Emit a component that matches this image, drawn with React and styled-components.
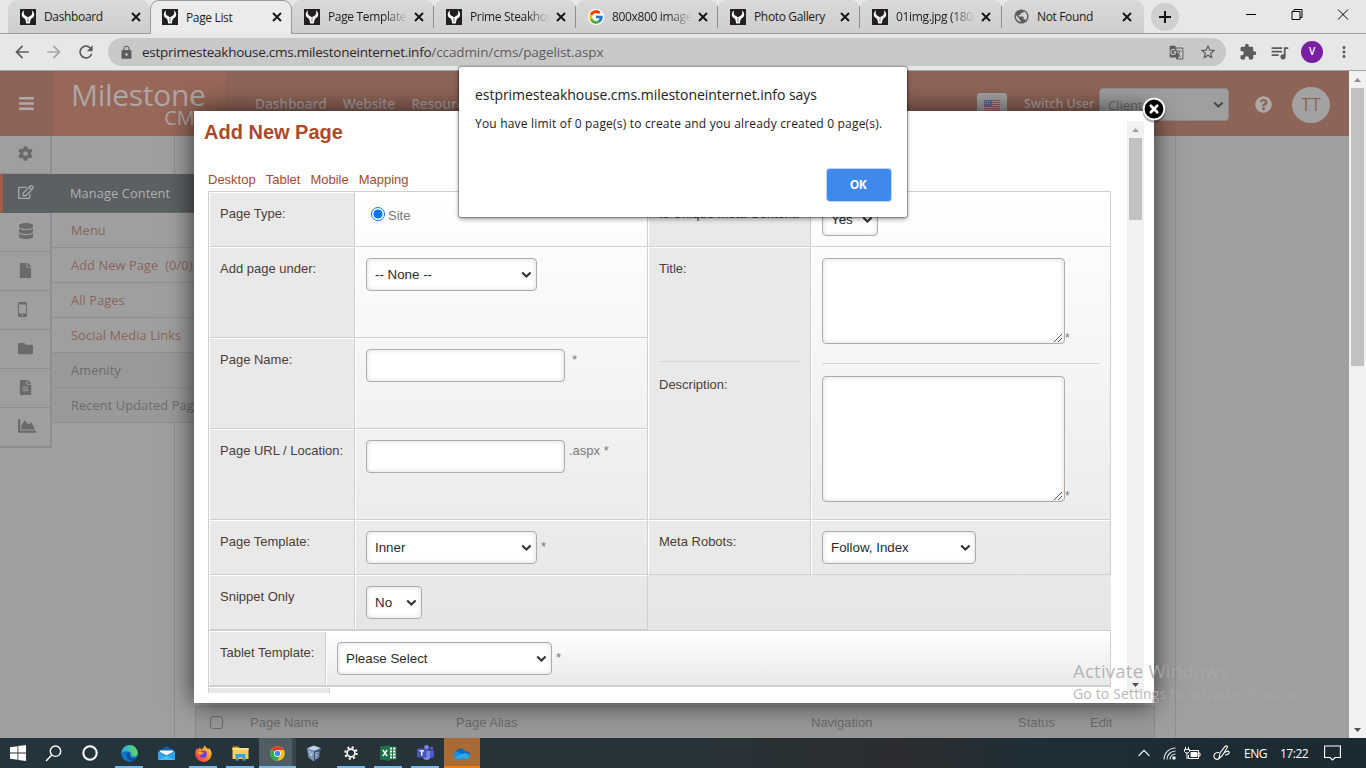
import React from "react";
import styled, { createGlobalStyle, css } from "styled-components";
import {
  MdArrowBack, MdArrowForward, MdRefresh, MdLock, MdGTranslate, MdStarBorder,
  MdExtension, MdQueueMusic, MdMoreVert, MdPublic,
} from "react-icons/md";
import {
  FaBars, FaCog, FaRegEdit, FaDatabase, FaFile, FaFolder, FaFileAlt, FaChartArea, FaQuestionCircle,
} from "react-icons/fa";
import { FcGoogle } from "react-icons/fc";

const GlobalStyle = createGlobalStyle`
  * { box-sizing: border-box; }
  body { margin: 0; overflow: hidden; }
`;

const ui = `"Open Sans", "Noto Sans", sans-serif`;
const arial = `"Liberation Sans", Arial, sans-serif`;

const Screen = styled.div`
  position: relative;
  width: 1366px;
  height: 768px;
  display: flex;
  flex-direction: column;
  overflow: hidden;
  font-family: ${ui};
`;

/* ---------- browser chrome ---------- */
const TabStrip = styled.div`
  height: 34px;
  flex: none;
  display: flex;
  padding-left: 8px;
  background: #e7e7e7;
  border-bottom: 1px solid #9b9b9b;
`;

const Tab = styled.div`
  width: 142px;
  height: 33px;
  padding: 0 ${(p) => p.$end ?? 9}px 0 12px;
  display: flex;
  align-items: center;
  border-radius: 9px 9px 0 0;
  background: linear-gradient(#d9d9d9, #cecece);
  border-right: ${(p) => (p.$sep ? "1px solid #8e8e8e" : "0")};
  border-image: ${(p) => (p.$sep ? "linear-gradient(transparent 7px, #8e8e8e 7px, #8e8e8e 27px, transparent 27px) 1" : "none")};
  ${(p) =>
    p.$active &&
    css`
      height: 34px;
      padding: 0 9px 1px 11px;
      background: #ebebeb;
      border: 1px solid #9b9b9b;
      border-bottom: 0;
    `}
`;

const TabTitle = styled.div`
  flex: 1;
  margin-left: 8px;
  padding-right: 2px;
  overflow: hidden;
  font-size: 12px;
  letter-spacing: -0.35px;
  color: #1c1c1c;
  white-space: nowrap;
  ${(p) => p.$fade && css`mask-image: linear-gradient(90deg, #000 70%, transparent);`}
`;

const CloseSvg = styled.svg`
  flex: none;
  margin-left: 6px;
`;

const NewTab = styled.div`
  width: 28px;
  height: 28px;
  margin: 3px 0 0 7px;
  border-radius: 50%;
  background: #cfcfcf;
  display: flex;
  align-items: center;
  justify-content: center;
`;

const WindowButtons = styled.div`
  margin-left: auto;
  width: 138px;
  height: 29px;
  display: flex;
  align-items: center;
  svg { flex: 1; }
`;

const Toolbar = styled.div`
  height: 37px;
  flex: none;
  display: flex;
  align-items: center;
  background: #e7e7e7;
  border-bottom: 1px solid #a3a3a3;
  color: #5a5c5e;
`;

const NavButtons = styled.div`
  width: 108px;
  padding-left: 12px;
  display: flex;
  gap: 12px;
`;

const AddressBar = styled.div`
  width: 1118px;
  height: 28px;
  padding: 0 9px 0 11px;
  border-radius: 14px;
  background: #c8c8c8;
  display: flex;
  align-items: center;
`;

const Url = styled.div`
  flex: 1;
  margin-left: 8px;
  font-size: 13.5px;
  letter-spacing: -0.26px;
  color: #28292b;
  span { color: #5c5e60; letter-spacing: -0.1px; }
`;

const ToolbarActions = styled.div`
  flex: 1;
  padding-left: 13px;
  display: flex;
  align-items: center;
`;

const Profile = styled.div`
  width: 22px;
  height: 22px;
  margin: 0 12px 0 11px;
  border-radius: 50%;
  background: #7b1fa2;
  color: #fff;
  font-size: 10px;
  font-weight: 600;
  line-height: 21px;
  text-align: center;
`;

/* ---------- page behind the dialog ---------- */
const Viewport = styled.div`
  height: 667px;
  flex: none;
  position: relative;
  display: flex;
`;

const Page = styled.div`
  width: 1349px;
  display: flex;
  flex-direction: column;
  background: #9f9f9f;
`;

const PageHeader = styled.div`
  height: 65px;
  flex: none;
  display: flex;
  background: #8f6458;
  color: #afabaa;
`;

const MenuToggle = styled.div`
  width: 53px;
  display: flex;
  align-items: center;
  justify-content: center;
`;

const Brand = styled.div`
  width: 172px;
  padding: 8px 19px 0 18px;
  background: #976759;
  color: #ada6a4;
  display: flex;
  flex-direction: column;
`;

const BrandName = styled.div`
  font-size: 30px;
  line-height: 32px;
  letter-spacing: -0.3px;
`;

const BrandSub = styled.div`
  text-align: right;
  font-size: 20px;
  line-height: 14px;
  letter-spacing: 0.1px;
`;

const MainNav = styled.div`
  width: 752px;
  padding: 0 0 1px 30px;
  display: flex;
  align-items: center;
  gap: 16px;
  font-size: 13.7px;
  letter-spacing: -0.1px;
  font-weight: 600;
  color: #ab9d98;
`;

const FlagBox = styled.div`
  width: 30px;
  height: 33px;
  margin: 22px 17px 0 0;
  border-radius: 3px;
  background: #a2a2a2;
  padding: 7px;
`;

const SwitchUser = styled.div`
  width: 75px;
  line-height: 66px;
  font-size: 12.6px;
  font-weight: 600;
  letter-spacing: -0.1px;
  color: #b0a29d;
`;

const UserSelect = styled.div`
  width: 130px;
  height: 33px;
  margin-top: 17px;
  padding: 0 4px 0 8px;
  border: 1px solid #8b8b8b;
  border-radius: 4px;
  background: #9f9f9f;
  display: flex;
  align-items: center;
  justify-content: space-between;
  font-size: 13px;
  line-height: 28px;
  color: #6d6d6d;
`;

const Help = styled.div`
  width: 63px;
  display: flex;
  align-items: center;
  padding: 2px 0 0 26px;
  color: #aeaaa9;
`;

const Avatar = styled.div`
  width: 38px;
  height: 36px;
  margin-top: 16px;
  border-radius: 50%;
  background: #a2a2a2;
  color: #8f6458;
  font-size: 17.5px;
  line-height: 35px;
  text-align: center;
`;

const PageBody = styled.div`
  flex: 1;
  display: flex;
`;

const IconRail = styled.div`
  width: 52px;
  height: 312px;
  border-right: 2px solid #909090;
  border-bottom: 2px solid #8c8c8c;
`;

const RailItem = styled.div`
  height: ${(p) => p.$h || 39}px;
  padding: 0 0 2px 18px;
  display: flex;
  align-items: center;
  color: #6a6a6a;
  border-bottom: 1px solid #8f8f8f;
  ${(p) =>
    p.$active &&
    css`
      width: 52px;
      padding-left: 15px;
      border-left: 3px solid #a15c47;
      border-bottom-color: #5b6063;
      background: #5b6063;
      color: #a8a8a8;
    `}
`;

/* Stacks above the content column that it overhangs */
const SubMenu = styled.div`
  position: relative;
  z-index: 1;
  width: 122px;
  padding-top: 38px;
`;

const SubItem = styled.div`
  width: 160px;
  height: 35px;
  padding-left: 19px;
  line-height: 34px;
  font-size: 12.8px;
  letter-spacing: 0.1px;
  white-space: pre;
  background: ${(p) => (p.$dim ? "#999" : "#9f9f9f")};
  color: ${(p) => (p.$dim ? "#6c6c6c" : "#8a655c")};
  border-bottom: 1px solid #8f8f8f;
`;

const SubHead = styled(SubItem)`
  height: 39px;
  padding-left: 18px;
  line-height: 38px;
  border-bottom: 1px solid #6d6d6d;
  background: #5b6063;
  color: #b0b0b0;
`;

const ContentColumn = styled.div`
  width: 1002px;
  border: solid #8e8e8e;
  border-width: 0 1px;
  display: flex;
  flex-direction: column;
  justify-content: flex-end;
`;

const ListHeader = styled.div`
  height: 32px;
  margin: 0 20px 0 20px;
  padding: 0 0 0 14px;
  display: flex;
  align-items: center;
  background: #989898;
  border: 1px solid #8a8a8a;
  border-bottom: 0;
  font-family: ${arial};
  font-size: 13px;
  color: #6c6c6c;
`;

const Checkbox = styled.div`
  width: 13px;
  height: 13px;
  margin-right: 27px;
  border: 1px solid #6a6a6a;
  border-radius: 3px;
`;

const ListCell = styled.div`
  width: ${(p) => p.$w}px;
`;

const Scrollbar = styled.div`
  width: 17px;
  flex: none;
  padding: 0 2px;
  display: flex;
  flex-direction: column;
  align-items: center;
  background: #f1f1f1;
`;

const ScrollThumb = styled.div`
  width: 13px;
  height: ${(p) => p.$h}px;
  margin-bottom: auto;
  background: #c1c1c1;
`;

const ScrollArrow = styled.div`
  height: 17px;
  display: flex;
  align-items: center;
`;

/* ---------- add page dialog ---------- */
const Dialog = styled.div`
  position: absolute;
  z-index: 2;
  left: 194px;
  top: 40px;
  width: 960px;
  height: 592px;
  padding: 10px;
  background: #fff;
  box-shadow: 0 0 25px rgba(0, 0, 0, 0.7);
`;

const DialogFrame = styled.div`
  height: 572px;
  display: flex;
  overflow: hidden;
  font-family: ${arial};
  font-size: 13px;
  color: #4c3d36;
`;

const DialogContent = styled.div`
  flex: 1;
  overflow: hidden;
`;

const DialogTitle = styled.div`
  height: 50px;
  line-height: 22px;
  font-size: 20px;
  font-weight: 700;
  color: #a84b2b;
`;

const DialogTabs = styled.div`
  height: 20px;
  padding-left: 4px;
  display: flex;
  gap: 10px;
  line-height: 18px;
  color: #a84b2b;
`;

const CloseBadge = styled.svg`
  position: absolute;
  left: 946px;
  top: -16px;
`;

const FormGrid = styled.div`
  width: 903px;
  margin-left: 4px;
  display: grid;
  grid-template-columns: 146px 293px 163px 300px;
  grid-template-rows: 55px 91px 91px 91px 55px 55px;
  border: solid #d0d0d0;
  border-width: 1px 0 1px 1px;
  background: linear-gradient(#fff, #fcfcfc 12%, #e5e5e5);
`;

const TabletGrid = styled.div`
  width: 903px;
  margin-left: 4px;
  display: grid;
  grid-template-columns: 117px 785px;
  grid-template-rows: 55px;
  border-left: 1px solid #d0d0d0;
  border-bottom: 1px solid #d0d0d0;
  background: linear-gradient(#fff, #e9e9e9);
`;

const NextRow = styled.div`
  width: 122px;
  height: 20px;
  margin-left: 4px;
  border: 1px solid #d0d0d0;
  border-top-color: #fff;
  background: #e9e9e9;
`;

const Cell = styled.div`
  padding: 10px;
  border: 1px solid #d0d0d0;
  border-top-color: #fff;
  border-left-color: #fff;
  line-height: 22px;
  display: flex;
  align-items: flex-start;
  grid-row: ${(p) => p.$rows || "auto"};
  grid-column: ${(p) => p.$cols || "auto"};
`;

const LabelCell = styled(Cell)`
  background: #e9e9e9;
`;

const StackCell = styled(Cell)`
  flex-direction: column;
  align-items: stretch;
  background: ${(p) => (p.$plain ? "transparent" : "#e9e9e9")};
`;

const EmptyCell = styled.div`
  grid-column: 3 / 5;
`;

const Divider = styled.div`
  height: 1px;
  margin: ${(p) => p.$m};
  background: #d6d6d6;
`;

const fieldBox = css`
  width: ${(p) => p.$w}px;
  height: ${(p) => p.$h || 33}px;
  border: 1px solid #adadad;
  border-radius: 4px;
  background: #fff;
  box-shadow: inset 0 0 5px rgba(0, 0, 0, 0.15);
`;

const Select = styled.div`
  ${fieldBox}
  padding: 0 4px 0 8px;
  display: flex;
  align-items: center;
  justify-content: space-between;
  font-size: 13.33px;
  color: #2b2b2b;
`;

const TextField = styled.div`
  ${fieldBox}
`;

const TextAreaRow = styled.div`
  display: flex;
  align-items: flex-end;
`;

const TextArea = styled.div`
  ${fieldBox}
  display: flex;
  align-items: flex-end;
  justify-content: flex-end;
`;

const Note = styled.span`
  margin-left: ${(p) => p.$gap ?? 4}px;
  font-size: ${(p) => p.$size || 13}px;
  line-height: ${(p) => p.$lh || 22}px;
  color: #7a7a7a;
`;

const RadioRow = styled.div`
  display: flex;
  align-items: center;
  padding: 1px 0 0 5px;
  height: 24px;
  color: #777;
`;

const Radio = styled.div`
  width: 14px;
  height: 14px;
  margin: -3px 3px 0 0;
  border: 1px solid #0075ff;
  border-radius: 50%;
  background: radial-gradient(#0075ff 4.2px, #fff 4.8px);
`;

/* ---------- alert ---------- */
const Alert = styled.div`
  position: absolute;
  z-index: 3;
  left: 459px;
  top: 67px;
  width: 448px;
  height: 150px;
  padding: 16px;
  border-radius: 2px;
  background: #fff;
  box-shadow: 0 0 1px 1px rgba(0, 0, 0, 0.3), 0 2px 5px rgba(0, 0, 0, 0.4);
  color: #202124;
  display: flex;
  flex-direction: column;
`;

const AlertTitle = styled.div`
  height: 31px;
  line-height: 23px;
  font-size: 14px;
  letter-spacing: -0.04px;
  white-space: nowrap;
`;

const AlertText = styled.div`
  line-height: 20px;
  font-size: 12px;
  letter-spacing: 0.19px;
  white-space: nowrap;
`;

const AlertButton = styled.div`
  width: 64px;
  height: 32px;
  margin: auto 0 0 auto;
  padding-right: 2px;
  border-radius: 3px;
  background: #4089ec;
  box-shadow: 0 0 0 1px #bcd6fb;
  color: #fff;
  font-size: 12px;
  font-weight: 700;
  line-height: 32px;
  text-align: center;
  letter-spacing: -0.6px;
`;

/* ---------- taskbar ---------- */
const Taskbar = styled.div`
  height: 30px;
  flex: none;
  display: flex;
  background: linear-gradient(90deg, #24343d, #263439 25%, #28343a 50%, #2b2d2f 66%, #1e2e37 76%, #1c2a32);
  color: #fff;
`;

const TaskButton = styled.div`
  width: ${(p) => p.$w || 37}px;
  margin-left: ${(p) => p.$ml || 0}px;
  padding-right: 1px;
  display: flex;
  align-items: center;
  justify-content: center;
  background: ${(p) => p.$bg || "transparent"};
  box-shadow: ${(p) => (p.$full ? `inset 0 -2px ${p.$line}` : "none")};
  ${(p) =>
    p.$line &&
    !p.$full &&
    css`
      background: linear-gradient(${p.$line}, ${p.$line}) 4px 28px / 28px 2px no-repeat;
    `}
`;

const Tray = styled.div`
  margin-left: auto;
  padding-right: 25px;
  display: flex;
  align-items: center;
`;

const TrayText = styled.div`
  width: ${(p) => p.$w}px;
  font-size: 12px;
  letter-spacing: -0.5px;
  white-space: nowrap;
`;

const Watermark = styled.div`
  position: absolute;
  z-index: 4;
  left: 1073px;
  top: 658px;
  color: rgba(167, 167, 167, 0.82);
  white-space: nowrap;
`;

const WatermarkTitle = styled.div`
  font-size: 18.5px;
  letter-spacing: 0.25px;
  line-height: 26px;
`;

const WatermarkText = styled.div`
  font-size: 14px;
  letter-spacing: 0.15px;
  line-height: 19px;
`;

/* ---------- drawings ---------- */
const BullIcon = () => (
  <svg width="16" height="16" viewBox="0 0 16 16" style={{ flex: "none" }}>
    <rect width="16" height="16" fill="#231f20" />
    <path d="M4.200 1.200C1.800 2.800 1 5.800 2.600 8c.6.9 1.600 1.400 2.600 1.900L6.300 14.500h3.400l1.100-4.600c1-.5 2-1 2.600-1.900 1.600-2.200.8-5.200-1.600-6.800.8 2.300.6 4-.5 5-1 .9-2.200 1-3.300 2.200-1.100-1.200-2.300-1.300-3.300-2.200C3.600 5.200 3.400 3.500 4.200 1.200z" fill="#fff" />
    <path d="M8 9V13" stroke="#231f20" strokeWidth=".6" />
  </svg>
);

const TabClose = () => (
  <CloseSvg width="10" height="10" viewBox="0 0 10 10" stroke="#151515" strokeWidth="1.9">
    <path d="M1 1l8 8M9 1l-8 8" />
  </CloseSvg>
);

const Chevron = ({ color = "#333" }) => (
  <svg width="11" height="8" viewBox="0 0 11 8" fill="none" stroke={color} strokeWidth="2.1">
    <path d="M1.200 1.400l4.200 4.200 4.200-4.200" />
  </svg>
);

const Grip = () => (
  <svg width="10" height="10" viewBox="0 0 10 10" stroke="#555" strokeWidth="1">
    <path d="M0 9l8-8M4 9l4-4" />
  </svg>
);

const Triangle = ({ down, color }) => (
  <svg width="7" height="4" viewBox="0 0 7 4" fill={color}>
    <path d={down ? "M0 0h7L3.500 4z" : "M0 4h7L3.500 0z"} />
  </svg>
);

const PhoneIcon = () => (
  <svg width="9" height="15" viewBox="0 0 9 15">
    <path fillRule="evenodd" d="M1.500 0h6A1.500 1.500 0 0 1 9 1.500v12A1.500 1.500 0 0 1 7.500 15h-6A1.500 1.500 0 0 1 0 13.500v-12A1.500 1.500 0 0 1 1.500 0zM1 2.500v9h7v-9zM3.800 12.600h1.400v1.300H3.800z" fill="currentColor" />
  </svg>
);

const FlagIcon = () => (
  <svg width="16" height="11" viewBox="0 0 16 11" style={{ display: "block" }}>
    <rect width="16" height="11" fill="#aaa1a1" />
    <path d="M0 .5h16M0 2.500h16M0 4.500h16M0 6.500h16M0 8.500h16M0 10.500h16" stroke="#95625c" />
    <rect width="8" height="6" fill="#5d6f96" />
    <path d="M1 1.500h6M1 3.500h6" stroke="#8f9cb5" strokeDasharray="1 1" />
  </svg>
);

const EdgeIcon = () => (
  <svg width="17" height="17" viewBox="0 0 17 17">
    <defs>
      <linearGradient id="edgeTop" x1="0" x2="1"><stop offset="0" stopColor="#2aa9e0" /><stop offset="1" stopColor="#62d85b" /></linearGradient>
    </defs>
    <circle cx="8.500" cy="8.500" r="8.300" fill="#1272c4" />
    <path d="M.3 8.500A8.200 8.200 0 0 1 16.800 8c0 2.600-2 3.600-4 3.600-2.100 0-3.100-.7-2.800-1.400.8-1.800-.6-4-3.300-4C3.600 6.200 1 7 .3 8.500z" fill="url(#edgeTop)" />
    <path d="M6.600 7.200c-2.500 3.200.2 8.100 5 8.600 1.500-.6 3-1.700 3.900-3.100-3.600 1.500-7.300.2-6.900-2.500C8.800 8.500 8 7.300 6.600 7.200z" fill="#0b4f9a" />
  </svg>
);

const MailIcon = () => (
  <svg width="17" height="14" viewBox="0 0 17 14">
    <path d="M0 5l8.500-5L17 5z" fill="#0f5ea8" />
    <path d="M1.800 4.500h13.400V6L8.500 9.500 1.800 6z" fill="#fff" />
    <path d="M0 5l8.500 4.800L17 5v9H0z" fill="#2aa4ee" />
    <path d="M0 14l8.500-4.200L17 14z" fill="#4bbaf6" />
  </svg>
);

const FirefoxIcon = () => (
  <svg width="17" height="17" viewBox="0 0 17 17">
    <defs>
      <linearGradient id="fox" x1="1" y1="0" x2="0" y2="1"><stop offset="0" stopColor="#ffe04a" /><stop offset=".45" stopColor="#ff9422" /><stop offset="1" stopColor="#f5156c" /></linearGradient>
    </defs>
    <path d="M10 .2c.4 2.300 2.600 2.700 3.200 4.200l.7-1.300c1.900 1.700 3 4.200 2.700 6.700A8.200 8.200 0 0 1 .3 9.500C.2 6.800 1 4.700 2.200 3.300L3 4.600 5 2.400l1 2.200C7.600 4 8.700 2.300 10 .2z" fill="url(#fox)" />
    <circle cx="8.300" cy="9.300" r="3.700" fill="#7542d9" />
    <path d="M3.200 7.200c2-.9 3.600-.3 5.600.5-.9 1.300-2.500 1-3 2C4.300 9.800 3.300 8.700 3.200 7.200z" fill="#ffad2c" />
  </svg>
);

const FolderIcon = () => (
  <svg width="17" height="15" viewBox="0 0 17 15">
    <path d="M.5.5h6l1.500 2H.5z" fill="#d79a1c" />
    <path d="M.5 2h16v11H.5z" fill="#fbcf55" />
    <path d="M.5 2h16v2H.5z" fill="#ffe08a" />
    <path d="M3.500 14.500V8h10v6.500h-3v-3h-4v3z" fill="#3ba0e6" />
  </svg>
);

const ChromeIcon = () => (
  <svg width="15" height="15" viewBox="0 0 15 15">
    <circle cx="7.500" cy="7.500" r="7.300" fill="#fbc116" />
    <path d="M7.500 7.500L1.200 3.800a7.300 7.300 0 0 1 12.600 0z" fill="#e33b2e" />
    <path d="M7.500 7.500L1.200 3.800A7.300 7.300 0 0 0 7 14.800l3.600-5.500z" fill="#2da94f" />
    <path d="M7.500 3.900h6.400L10.600 9.300z" fill="#fbc116" />
    <circle cx="7.500" cy="7.500" r="3.500" fill="#fff" />
    <circle cx="7.500" cy="7.500" r="2.700" fill="#4285f4" />
  </svg>
);

const BoxIcon = () => (
  <svg width="16" height="17" viewBox="0 0 16 17">
    <path d="M8 .5l7 2.700-1.500 9.300L8 16.500l-5.500-4L1 3.200z" fill="#3c5480" />
    <path d="M8 .5l7 2.700L8 6 1 3.200z" fill="#b4c5db" />
    <path d="M1 3.200L8 6v10.500l-5.500-4z" fill="#7c95b8" />
    <path d="M3.500 6l1.500 5L6.300 7.500M9.800 7.500v6M9.800 7.800c3.600-1.800 3.600 1.200.3 2.400 3.600-.9 2.700 2.500-.3 3M4.500 3.200l3.500-1 3.500 1L8 4.500z" fill="none" stroke="#dce6f2" strokeWidth=".7" />
  </svg>
);

const SettingsIcon = () => (
  <svg width="14" height="14" viewBox="0 0 14 14" fill="none" stroke="#fff">
    <circle cx="7" cy="7" r="3.900" strokeWidth="1.700" />
    <circle cx="7" cy="7" r="5.700" strokeWidth="2" strokeDasharray="2.100 2.377" />
  </svg>
);

const ExcelIcon = () => (
  <svg width="17" height="16" viewBox="0 0 17 16">
    <path d="M9 2h7v12H9z" fill="#fff" stroke="#1e7145" />
    <path d="M9 5h7M9 8h7M9 11h7M12.500 2v12" stroke="#1e7145" />
    <path d="M0 1.500L10 0v16L0 14.500z" fill="#1e7145" />
    <path d="M2.800 4.800l4.400 6.400M7.200 4.800l-4.400 6.400" stroke="#fff" strokeWidth="1.500" />
  </svg>
);

const TeamsIcon = () => (
  <svg width="17" height="16" viewBox="0 0 17 16">
    <circle cx="9.500" cy="2.500" r="2.400" fill="#7b83eb" />
    <circle cx="14.500" cy="3.300" r="1.800" fill="#5059c9" />
    <path d="M6 5.500h7.500V11a4 4 0 0 1-7.500 2z" fill="#7b83eb" />
    <path d="M13 5.500h4V10c0 2.500-2.500 3.500-4 2.500z" fill="#5059c9" />
    <rect y="3.500" width="9.500" height="9" rx=".8" fill="#4b53bc" />
    <path d="M2.500 5.800H7M4.750 5.800v5" stroke="#fff" strokeWidth="1.300" />
  </svg>
);

const CloudIcon = () => (
  <svg width="17" height="11" viewBox="0 0 17 11">
    <path d="M3.500 10.500A3.500 3.500 0 0 1 3 4 5.200 5.200 0 0 1 12.500 3.400a3.600 3.600 0 0 1 1.500 7.100z" fill="#0f6cbd" />
    <path d="M3.500 10.500A3.400 3.400 0 0 1 2 4.200c1.500-.6 3-.4 4.500.5L14.500 10.500z" fill="#1491df" />
    <path d="M1 9.500l8.500-3.800c3.500-1.500 7 .3 7.200 2.500a2.700 2.700 0 0 1-2.700 2.500h-10.500c-1.300 0-2-.5-2.500-1.200z" fill="#2ba6f0" />
  </svg>
);

/* ---------- data ---------- */
const tabs = [
  { title: "Dashboard" },
  { title: "Page List", active: true },
  { title: "Page Template", fade: true, sep: true },
  { title: "Prime Steakhouse", fade: true, sep: true },
  { title: "800x800 image", fade: true, sep: true, icon: <FcGoogle size={16} style={{ flex: "none", background: "#fff", borderRadius: 8 }} /> },
  { title: "Photo Gallery", sep: true },
  { title: "01img.jpg (1800", fade: true, sep: true, end: 10 },
  { title: "Not Found", end: 12, icon: <MdPublic size={17} color="#5c5e60" style={{ flex: "none", margin: "0 -1px 0 -1px" }} /> },
];

const rail = [
  <FaFile key="f" size={15} />, <PhoneIcon key="p" />, <FaFolder key="d" size={15} />,
  <FaFileAlt key="a" size={15} />, <FaChartArea key="c" size={18} />,
];

export default function App() {
  return (
    <Screen>
      <GlobalStyle />
      <TabStrip>
        {tabs.map((t) => (
          <Tab key={t.title} $active={t.active} $sep={t.sep} $end={t.end}>
            {t.icon || <BullIcon />}
            <TabTitle $fade={t.fade}>{t.title}</TabTitle>
            <TabClose />
          </Tab>
        ))}
        <NewTab>
          <svg width="12" height="12" viewBox="0 0 12 12" stroke="#111" strokeWidth="2"><path d="M6 0v12M0 6h12" /></svg>
        </NewTab>
        <WindowButtons>
          <svg width="11" height="11" viewBox="0 0 11 11" stroke="#000"><path d="M.5 5.500h10" /></svg>
          <svg width="11" height="11" viewBox="0 0 11 11" fill="none" stroke="#000"><path d="M.5 2.500h8v8h-8zM2.500 2.500v-2h8v8h-2" /></svg>
          <svg width="11" height="11" viewBox="0 0 11 11" stroke="#000"><path d="M.5.5l10 10M10.500.5l-10 10" /></svg>
        </WindowButtons>
      </TabStrip>

      <Toolbar>
        <NavButtons>
          <MdArrowBack size={20} /><MdArrowForward size={20} color="#a6a6a6" /><MdRefresh size={20} />
        </NavButtons>
        <AddressBar>
          <MdLock size={15} />
          <Url>estprimesteakhouse.cms.milestoneinternet.info<span>/ccadmin/cms/pagelist.aspx</span></Url>
          <MdGTranslate size={15} />
          <MdStarBorder size={18} style={{ marginLeft: 15 }} />
        </AddressBar>
        <ToolbarActions>
          <MdExtension size={18} />
          <MdQueueMusic size={21} style={{ marginLeft: 12 }} />
          <Profile>V</Profile>
          <MdMoreVert size={18} />
        </ToolbarActions>
      </Toolbar>

      <Viewport>
        <Page>
          <PageHeader>
            <MenuToggle><FaBars size={17} /></MenuToggle>
            <Brand>
              <BrandName>Milestone</BrandName>
              <BrandSub>CMS</BrandSub>
            </Brand>
            <MainNav><span>Dashboard</span><span>Website</span><span>Resources</span></MainNav>
            <FlagBox><FlagIcon /></FlagBox>
            <SwitchUser>Switch User</SwitchUser>
            <UserSelect>Client ad<Chevron color="#4a4a4a" /></UserSelect>
            <Help><FaQuestionCircle size={17} /></Help>
            <Avatar>TT</Avatar>
          </PageHeader>
          <PageBody>
            <IconRail>
              <RailItem $h={38}><FaCog size={15} /></RailItem>
              <RailItem $active><FaRegEdit size={16} /></RailItem>
              <RailItem><FaDatabase size={16} /></RailItem>
              {rail.map((icon, i) => <RailItem key={i}>{icon}</RailItem>)}
            </IconRail>
            <SubMenu>
              <SubHead>Manage Content</SubHead>
              <SubItem>Menu</SubItem>
              <SubItem>{"Add New Page  (0/0)"}</SubItem>
              <SubItem>All Pages</SubItem>
              <SubItem>Social Media Links</SubItem>
              <SubItem $dim>Amenity</SubItem>
              <SubItem $dim>Recent Updated Pages</SubItem>
            </SubMenu>
            <ContentColumn>
              <ListHeader>
                <Checkbox />
                <ListCell $w={206}>Page Name</ListCell>
                <ListCell $w={355}>Page Alias</ListCell>
                <ListCell $w={207}>Navigation</ListCell>
                <ListCell $w={72}>Status</ListCell>
                <span>Edit</span>
              </ListHeader>
            </ContentColumn>
          </PageBody>
        </Page>
        <Scrollbar>
          <ScrollArrow><Triangle color="#8e8e8e" /></ScrollArrow>
          <ScrollThumb $h={278} />
          <ScrollArrow><Triangle down color="#505050" /></ScrollArrow>
        </Scrollbar>

        <Dialog>
          <DialogFrame>
            <DialogContent>
              <DialogTitle>Add New Page</DialogTitle>
              <DialogTabs><span>Desktop</span><span>Tablet</span><span>Mobile</span><span>Mapping</span></DialogTabs>
              <FormGrid>
                <LabelCell>Page Type:</LabelCell>
                <Cell><RadioRow><Radio />Site</RadioRow></Cell>
                <LabelCell>Is Unique Meta Content:</LabelCell>
                <Cell><Select $w={56}>Yes<Chevron /></Select></Cell>

                <LabelCell>Add page under:</LabelCell>
                <Cell><Select $w={171}>-- None --<Chevron /></Select></Cell>
                <StackCell $rows="2 / 5" $cols="3">
                  <span>Title:</span>
                  <Divider $m="81px 0 12px" />
                  <span>Description:</span>
                </StackCell>
                <StackCell $rows="2 / 5" $cols="4" $plain>
                  <TextAreaRow><TextArea $w={243} $h={86}><Grip /></TextArea><Note $gap={0} $size={12} $lh={12}>*</Note></TextAreaRow>
                  <Divider $m="19px 0 12px" />
                  <TextAreaRow><TextArea $w={243} $h={126}><Grip /></TextArea><Note $gap={0} $size={12} $lh={12}>*</Note></TextAreaRow>
                </StackCell>

                <LabelCell $cols="1">Page Name:</LabelCell>
                <Cell $cols="2"><TextField $w={199} /><Note $gap={7}>*</Note></Cell>
                <LabelCell $cols="1">Page URL / Location:</LabelCell>
                <Cell $cols="2"><TextField $w={199} /><Note>.aspx *</Note></Cell>

                <LabelCell>Page Template:</LabelCell>
                <Cell><Select $w={171}>Inner<Chevron /></Select><Note $lh={32}>*</Note></Cell>
                <LabelCell>Meta Robots:</LabelCell>
                <Cell><Select $w={154}>Follow, Index<Chevron /></Select></Cell>

                <LabelCell>Snippet Only</LabelCell>
                <Cell><Select $w={56}>No<Chevron /></Select></Cell>
                <EmptyCell />
              </FormGrid>
              <TabletGrid>
                <LabelCell>Tablet Template:</LabelCell>
                <Cell><Select $w={215}>Please Select<Chevron /></Select><Note $lh={32}>*</Note></Cell>
              </TabletGrid>
              <NextRow />
            </DialogContent>
            <Scrollbar>
              <ScrollArrow><Triangle color="#a0a0a0" /></ScrollArrow>
              <ScrollThumb $h={82} />
              <ScrollArrow><Triangle down color="#505050" /></ScrollArrow>
            </Scrollbar>
          </DialogFrame>
          <CloseBadge width="28" height="28" viewBox="0 0 28 28">
            <circle cx="14" cy="16" r="11.500" fill="#000" opacity=".3" />
            <circle cx="14" cy="14" r="10.300" fill="#000" stroke="#fff" strokeWidth="1.800" />
            <path d="M10.800 10.800l6.400 6.400M17.200 10.800l-6.400 6.400" stroke="#fff" strokeWidth="2.700" strokeLinecap="round" />
          </CloseBadge>
        </Dialog>
      </Viewport>

      <Taskbar>
        <TaskButton $w={36}>
          <svg width="16" height="16" viewBox="0 0 16 16" fill="#fff"><path d="M0 2.200l7.500-1v6.400H0zM8.300 1.100L16 0v7.600H8.300zM0 8.400h7.500v6.400l-7.500-1zM8.300 8.400H16V16l-7.700-1.100z" /></svg>
        </TaskButton>
        <TaskButton $w={36}>
          <svg width="17" height="17" viewBox="0 0 17 17" fill="none" stroke="#fff" strokeWidth="1.400"><circle cx="10.500" cy="6.200" r="5.200" /><path d="M6.800 10L1 16" /></svg>
        </TaskButton>
        <TaskButton $w={36}>
          <svg width="16" height="16" viewBox="0 0 16 16" fill="none" stroke="#fff" strokeWidth="2"><circle cx="8" cy="8" r="6.700" /></svg>
        </TaskButton>
        <TaskButton $ml={3} $line="#76b9ed"><EdgeIcon /></TaskButton>
        <TaskButton><MailIcon /></TaskButton>
        <TaskButton $line="#76b9ed"><FirefoxIcon /></TaskButton>
        <TaskButton $line="#76b9ed"><FolderIcon /></TaskButton>
        <TaskButton $bg="linear-gradient(90deg, #4f5d64 33px, #39464d 33px)" $line="#76b9ed" $full><ChromeIcon /></TaskButton>
        <TaskButton><BoxIcon /></TaskButton>
        <TaskButton $line="#76b9ed"><SettingsIcon /></TaskButton>
        <TaskButton $line="#76b9ed"><ExcelIcon /></TaskButton>
        <TaskButton $line="#76b9ed"><TeamsIcon /></TaskButton>
        <TaskButton $w={36} $bg="#a96a33" $line="#ff7a00" $full><CloudIcon /></TaskButton>
        <Tray>
          <svg width="12" height="8" viewBox="0 0 12 8" fill="none" stroke="#fff" strokeWidth="1.200" style={{ marginRight: 13 }}><path d="M.6 6.800L6 1.400l5.400 5.400" /></svg>
          <svg width="13" height="13" viewBox="0 0 13 13" fill="none" stroke="#e4e7e9" strokeWidth="1.100" style={{ marginRight: 8 }}>
            <path d="M1 12.500A11.500 11.500 0 0 1 12.500 1M4 12.500a8.500 8.500 0 0 1 8.500-8.500M7 12.500a5.500 5.500 0 0 1 5.500-5.500" /><circle cx="11" cy="11" r="1.200" fill="#fff" />
          </svg>
          <svg width="17" height="13" viewBox="0 0 17 13" fill="none" stroke="#fff" style={{ marginRight: 12 }}>
            <path d="M6 3.500h8.500v8h-10V8M14.500 6h1.500v3h-1.500M1.500 0v2M4.500 0v2M.5 2.500h5v2l-1.500 1.500H2L.5 4.500zM3 6v6" /><path d="M7 5.500h6v4H7z" fill="#fff" />
          </svg>
          <svg width="17" height="16" viewBox="0 0 17 16" fill="none" stroke="#fff" strokeWidth="1.100" style={{ marginRight: 14 }}>
            <path d="M6 13.500L7 8l5-6.500c2-1.500 3 0 2 1.500L9 11zM6 7.500C2 7 0 10 1.500 13c1 2 3.500 1.500 4.500.5M11 8c2-1 4-3 5-1s-2 3-4 3" />
          </svg>
          <TrayText $w={36}>ENG</TrayText>
          <TrayText $w={44}>17:22</TrayText>
          <svg width="17" height="16" viewBox="0 0 17 16" fill="none" stroke="#fff" strokeWidth="1.100"><path d="M.6 1h15.800v11.500H11l-2.500 2.500L6 12.500H.6z" /></svg>
        </Tray>
      </Taskbar>

      <Alert>
        <AlertTitle>estprimesteakhouse.cms.milestoneinternet.info says</AlertTitle>
        <AlertText>You have limit of 0 page(s) to create and you already created 0 page(s).</AlertText>
        <AlertButton>OK</AlertButton>
      </Alert>

      <Watermark>
        <WatermarkTitle>Activate Windows</WatermarkTitle>
        <WatermarkText>Go to Settings to activate Windows.</WatermarkText>
      </Watermark>
    </Screen>
  );
}
